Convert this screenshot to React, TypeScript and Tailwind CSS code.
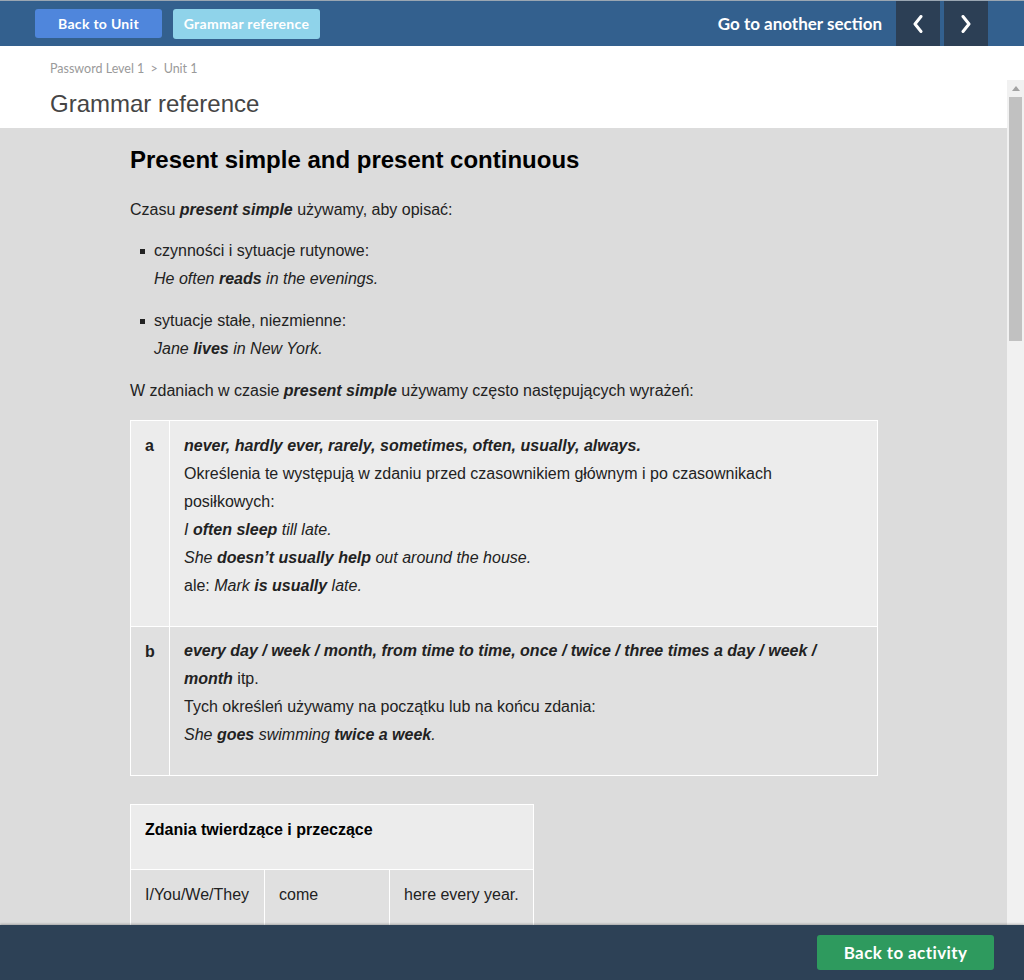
import React from "react";

const Chevron = ({ dir }: { dir: "l" | "r" }) => (
  <svg width="10" height="18" viewBox="0 0 10 18" fill="none">
    <polyline
      points={dir === "l" ? "8,1.5 2,9 8,16.5" : "2,1.5 8,9 2,16.5"}
      stroke="white"
      strokeWidth="3"
      strokeLinecap="round"
      strokeLinejoin="round"
    />
  </svg>
);

export default function App() {
  const body = { fontFamily: '"Liberation Sans", Arial, sans-serif' };
  return (
    <div className="h-[980px] w-[1024px] flex flex-col overflow-hidden bg-white" style={body}>
      {/* Top bar */}
      <div className="h-[46px] shrink-0 bg-[#33608e] border-t border-[#9aa6b2] flex items-center" style={{ fontFamily: 'Lato, "Open Sans", sans-serif' }}>
        <div className="flex items-center gap-[11px] pl-[35px]">
          <div className="h-[29px] w-[127px] rounded-[3px] bg-[#4f86dc] text-white text-[14px] font-bold flex items-center justify-center tracking-[0.3px]">
            Back to Unit
          </div>
          <div className="h-[30px] w-[147px] rounded-[3px] bg-[#8fd3ea] text-white text-[14px] font-bold flex items-center justify-center tracking-[0.3px]">
            Grammar reference
          </div>
        </div>
        <div className="ml-auto flex items-stretch h-full">
          <div className="flex items-center pr-[14px] text-white text-[17px] font-bold">Go to another section</div>
          <div className="w-[44px] bg-[#2c3f55] flex items-center justify-center">
            <Chevron dir="l" />
          </div>
          <div className="w-[4px]" />
          <div className="w-[44px] bg-[#2c3f55] flex items-center justify-center">
            <Chevron dir="r" />
          </div>
          <div className="w-[36px]" />
        </div>
      </div>

      {/* Breadcrumb */}
      <div className="h-[34px] shrink-0 bg-white pl-[50px] flex items-center pt-[12px] text-[12.5px] text-[#9a9a9a]" style={{ fontFamily: 'Lato, "Open Sans", sans-serif' }}>
        Password Level 1 <span className="mx-[6px]">&gt;</span> Unit 1
      </div>

      {/* Middle scroll area */}
      <div className="h-[845px] shrink-0 flex overflow-hidden">
        <div className="flex-1 overflow-hidden">
          <div className="h-[48px] bg-white pl-[50px] flex items-center text-[24px] text-[#454545]">Grammar reference</div>
          <div className="bg-[#dcdcdc] pt-[17px] pl-[130px] pb-[40px] text-[#222] text-[16px] leading-[28px]">
            <div className="w-[748px]">
              <h2 className="text-[24px] font-bold leading-[30px] text-black">Present simple and present continuous</h2>
              <p className="mt-[21px]">
                Czasu <b><i>present simple</i></b> używamy, aby opisać:
              </p>
              <ul className="mt-[13px]">
                <li className="flex">
                  <span className="w-[24px] flex items-start pt-[12px] pl-[10px]"><span className="block w-[5px] h-[5px] bg-[#222]" /></span>
                  <div>
                    czynności i sytuacje rutynowe:
                    <br />
                    <i>He often <b>reads</b> in the evenings.</i>
                  </div>
                </li>
                <li className="flex mt-[14px]">
                  <span className="w-[24px] flex items-start pt-[12px] pl-[10px]"><span className="block w-[5px] h-[5px] bg-[#222]" /></span>
                  <div>
                    sytuacje stałe, niezmienne:
                    <br />
                    <i>Jane <b>lives</b> in New York.</i>
                  </div>
                </li>
              </ul>
              <p className="mt-[14px]">
                W zdaniach w czasie <b><i>present simple</i></b> używamy często następujących wyrażeń:
              </p>

              <div className="mt-[15px] border border-white">
                <div className="flex bg-[#ececec]">
                  <div className="w-[39px] shrink-0 border-r border-white pl-[14px] pt-[11px] font-bold">a</div>
                  <div className="flex-1 pl-[14px] pr-[30px] pt-[11px] pb-[26px]">
                    <b><i>never, hardly ever, rarely, sometimes, often, usually, always.</i></b>
                    <br />
                    Określenia te występują w zdaniu przed czasownikiem głównym i po czasownikach posiłkowych:
                    <br />
                    <i>I <b>often sleep</b> till late.</i>
                    <br />
                    <i>She <b>doesn’t usually help</b> out around the house.</i>
                    <br />
                    ale: <i>Mark <b>is usually</b> late.</i>
                  </div>
                </div>
                <div className="flex bg-[#e0e0e0] border-t border-white">
                  <div className="w-[39px] shrink-0 border-r border-white pl-[14px] pt-[11px] font-bold">b</div>
                  <div className="flex-1 pl-[14px] pr-[20px] pt-[10px] pb-[26px]">
                    <b><i>every day / week / month, from time to time, once / twice / three times a day / week / month</i></b> itp.
                    <br />
                    Tych określeń używamy na początku lub na końcu zdania:
                    <br />
                    <i>She <b>goes</b> swimming <b>twice a week</b>.</i>
                  </div>
                </div>
              </div>

              <div className="mt-[28px] w-[404px] border border-white">
                <div className="bg-[#ececec] pl-[14px] pt-[11px] pb-[25px] text-[16px] font-bold text-black">
                  Zdania twierdzące i przeczące
                </div>
                <div className="flex bg-[#e0e0e0] border-t border-white">
                  <div className="w-[134px] shrink-0 border-r border-white pl-[14px] pt-[11px] pb-[40px]">I/You/We/They</div>
                  <div className="w-[125px] shrink-0 border-r border-white pl-[14px] pt-[11px] pb-[40px]">come</div>
                  <div className="flex-1 pl-[14px] pt-[11px] pb-[40px]">here every year.</div>
                </div>
              </div>
            </div>
          </div>
        </div>
        {/* scrollbar */}
        <div className="w-[17px] shrink-0 bg-[#f1f1f1] flex flex-col items-center">
          <div className="h-[17px] w-full flex items-center justify-center">
            <svg width="8" height="5" viewBox="0 0 8 5"><polygon points="4,0 8,5 0,5" fill="#a3a3a3" /></svg>
          </div>
          <div className="w-[13px] h-[244px] bg-[#c1c1c1]" />
        </div>
      </div>

      {/* Bottom bar */}
      <div className="h-[55px] shrink-0 bg-[#2d4156] shadow-[0_-1px_2px_rgba(0,0,0,0.25)] flex items-center justify-end pr-[30px] relative z-10">
        <div className="h-[35px] w-[177px] rounded-[3px] bg-[#2e9a5e] text-white text-[17px] font-bold flex items-center justify-center tracking-[0.4px]" style={{ fontFamily: 'Lato, "Open Sans", sans-serif' }}>
          Back to activity
        </div>
      </div>
    </div>
  );
}
